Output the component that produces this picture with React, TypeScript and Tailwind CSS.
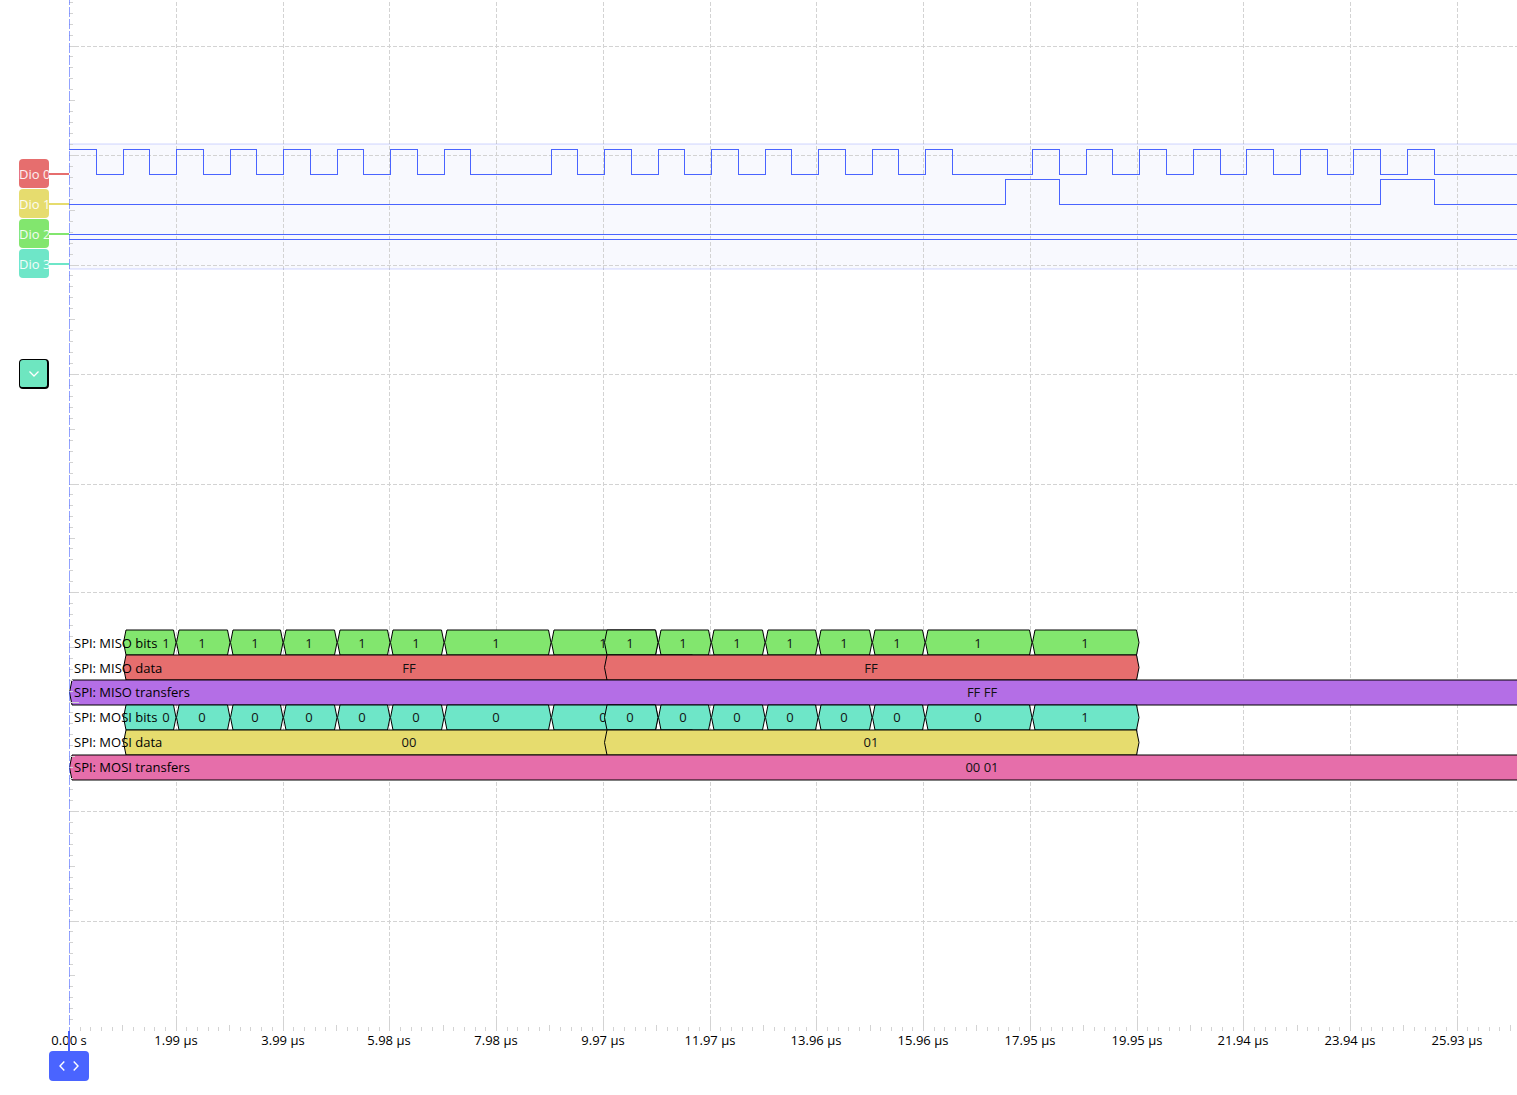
import React from "react";

const GRID = "#d3d3d3";
const ACCENT = "#4a64ff";
const FONT = "font-['Open_Sans','Noto_Sans',sans-serif]";

const channels = [
  { name: "Dio 0", bg: "bg-[#e66e6e]" },
  { name: "Dio 1", bg: "bg-[#e6dc6e]" },
  { name: "Dio 2", bg: "bg-[#82e66e]" },
  { name: "Dio 3", bg: "bg-[#6ee6c8]" },
];

// Horizontal positions are relative to the time origin of the plot.
const ORIGIN = 69;
const FAR = 6000;
const DIVISION = 106.75;

const rows = [46, 155, 265, 374, 484, 592, 702, 811, 921, 1030];
const timeLabels = [
  "0.00 s", "1.99 µs", "3.99 µs", "5.98 µs", "7.98 µs", "9.97 µs", "11.97 µs",
  "13.96 µs", "15.96 µs", "17.95 µs", "19.95 µs", "21.94 µs", "23.94 µs", "25.93 µs",
];

const clockEdges = [
  96, 123, 149, 176, 203, 230, 256, 283, 310, 337, 363, 390, 417, 444, 470, 551,
  577, 604, 631, 658, 684, 711, 738, 765, 791, 818, 845, 872, 898, 925, 952, 1032,
  1059, 1086, 1112, 1139, 1166, 1193, 1220, 1246, 1273, 1300, 1327, 1353, 1380, 1407, 1434,
];
const dataEdges = [1005, 1059, 1380, 1434];

function wave(edges: number[], high: number, low: number, startHigh: boolean) {
  let level = startHigh;
  const y = () => (level ? high : low) + 0.5;
  let d = `M0 ${y()}`;
  for (const edge of edges) {
    d += `H${edge - ORIGIN + 0.5}`;
    level = !level;
    d += `V${y()}`;
  }
  return `${d}H${FAR}`;
}

type Segment = [start: number, end: number, label: string, labelX: number];

const bitSpans: [number, number, number][] = [
  [123, 176, 166], [176, 230, 202], [230, 283, 255], [283, 337, 309], [337, 390, 362],
  [390, 444, 416], [444, 551, 496], [551, 658, 603], [604, 658, 630], [658, 711, 683],
  [711, 765, 737], [765, 818, 790], [818, 872, 844], [872, 925, 897], [925, 1032, 978],
  [1032, 1139, 1085],
];
const bits = (values: string): Segment[] =>
  bitSpans.map(([a, b, x], i) => [a, b, values[i], x]);

const decoders: { name: string; top: number; baseline: number; fill: string; segments: Segment[] }[] = [
  { name: "SPI: MISO bits", top: 630, baseline: 648, fill: "#82e66e", segments: bits("1111111111111111") },
  { name: "SPI: MISO data", top: 655, baseline: 673, fill: "#e66e6e", segments: [[123, 695, "FF", 409], [604, 1139, "FF", 871]] },
  { name: "SPI: MISO transfers", top: 680, baseline: 697, fill: "#b46ee6", segments: [[69, FAR, "FF FF", 982]] },
  { name: "SPI: MOSI bits", top: 705, baseline: 722, fill: "#6ee6c8", segments: bits("0000000000000001") },
  { name: "SPI: MOSI data", top: 730, baseline: 747, fill: "#e6dc6e", segments: [[123, 695, "00", 409], [604, 1139, "01", 871]] },
  { name: "SPI: MOSI transfers", top: 755, baseline: 772, fill: "#e66eaa", segments: [[69, FAR, "00 01", 982]] },
];

function hexagon(start: number, end: number, top: number) {
  const a = start - ORIGIN + 0.5;
  const b = end - ORIGIN;
  return `M${a} ${top + 12.5}L${a + 2.5} ${top}H${b - 2.5}L${b} ${top + 12.5}L${b - 2.5} ${top + 25}H${a + 2.5}Z`;
}

function Grid() {
  return (
    <g stroke={GRID} fill="none" shapeRendering="crispEdges">
      {rows.slice(0, 9).map((y) => (
        <path key={y} d={`M0 ${y + 0.5}H${FAR}`} strokeDasharray="4 2" />
      ))}
      {Array.from({ length: 40 }, (_, i) => Math.floor(0.5 + DIVISION * (i + 1))).map((x) => (
        <path key={x} d={`M${x + 0.5} 2V1020`} strokeDasharray="4 2" />
      ))}
    </g>
  );
}

function Ticks() {
  let d = "";
  let prev = -63.4;
  for (const y of rows) {
    const step = (y - prev) / 10;
    for (let k = 0; k < 10; k++) {
      const ty = Math.floor(prev + step * k);
      if (ty >= 0) d += `M0 ${ty + 0.5}h${k === 0 ? 10 : k === 5 ? 6 : 4}`;
    }
    prev = y;
  }
  for (let i = 1; i < 400; i++) {
    const x = Math.floor(0.5 + (DIVISION / 10) * i) + 0.5;
    d += `M${x} 1031v${i % 10 === 0 ? -11 : i % 5 === 0 ? -6 : -4}`;
  }
  return <path d={d} stroke={GRID} shapeRendering="crispEdges" />;
}

function Decoders() {
  return (
    <g fontSize="13" fill="#111">
      {decoders.map((row) => (
        <g key={row.name}>
          {row.segments.map(([start, end, label, x], i) => (
            <g key={i}>
              <path d={hexagon(start, end, row.top)} fill={row.fill} stroke="#000" strokeWidth="1" />
              <text x={x - ORIGIN} y={row.baseline} textAnchor="middle">{label}</text>
            </g>
          ))}
          <text x="5" y={row.baseline} fill="#000">{row.name}</text>
        </g>
      ))}
    </g>
  );
}

function Plot() {
  return (
    <svg className="block h-[1051px] min-w-0 flex-1 overflow-visible" role="img" aria-label="Logic analyzer plot">
      <rect x="0" y="144" width={FAR} height="125" fill="#f8f9fe" />
      <Grid />
      <path d={`M0 144H${FAR}M0 269H${FAR}`} stroke={ACCENT} strokeOpacity="0.13" strokeWidth="2" />
      <g fill="none" stroke={ACCENT} shapeRendering="crispEdges">
        <path d={wave(clockEdges, 149, 174, true)} />
        <path d={wave(dataEdges, 179, 204, false)} />
        <path d={wave([], 209, 234, false)} />
        <path d={wave([], 239, 264, true)} />
      </g>
      <Decoders />
      <Ticks />
      <path d="M0.5 -5V1031" stroke={ACCENT} strokeOpacity="0.6" strokeDasharray="10 2" shapeRendering="crispEdges" />
      <g fontSize="13" fill="#000" textAnchor="middle">
        {timeLabels.map((label, i) => (
          <text key={label} x={Math.round(DIVISION * i)} y="1045">{label}</text>
        ))}
      </g>
      <path d="M0 1031V1051" stroke={ACCENT} strokeWidth="2" />
    </svg>
  );
}

export default function App() {
  return (
    <main className={`min-h-screen overflow-hidden bg-white text-[13px] ${FONT}`}>
      <div className="flex">
        <aside className="w-[69px] shrink-0 pt-[159px] pl-[19px]">
          <ul className="flex flex-col gap-px">
            {channels.map((c) => (
              <li key={c.name} className="flex items-center">
                <button
                  type="button"
                  className={`h-[29px] w-[30px] shrink-0 rounded text-left leading-[31px] whitespace-nowrap text-white/90 ${c.bg}`}
                >
                  {c.name}
                </button>
                <span className={`h-0.5 flex-1 ${c.bg}`} />
              </li>
            ))}
          </ul>
          <button
            type="button"
            aria-label="Collapse digital channels"
            className="mt-[81px] flex h-[30px] w-[30px] items-center justify-center rounded border border-r-2 border-b-2 border-black bg-[#6ee6c0] text-white"
          >
            <svg width="12" height="8" viewBox="0 0 12 8" fill="none" stroke="currentColor" strokeWidth="1.3">
              <path d="M1.5 1.5L6 6L10.5 1.5" />
            </svg>
          </button>
        </aside>
        <Plot />
      </div>
      <button
        type="button"
        aria-label="Move time origin"
        className="ml-[49px] flex h-[30px] w-10 items-center justify-center gap-2 rounded bg-[#4a64ff] text-white"
      >
        <svg width="6" height="10" viewBox="0 0 6 10" fill="none" stroke="currentColor" strokeWidth="1.4">
          <path d="M5.3 0.5L1 5L5.3 9.5" />
        </svg>
        <svg width="6" height="10" viewBox="0 0 6 10" fill="none" stroke="currentColor" strokeWidth="1.4">
          <path d="M0.7 0.5L5 5L0.7 9.5" />
        </svg>
      </button>
    </main>
  );
}
